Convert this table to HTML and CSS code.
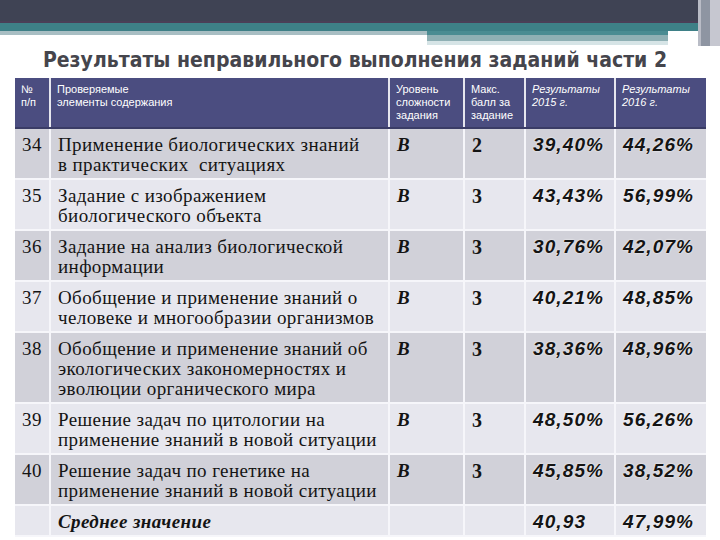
FILE: index.html
```html
<!DOCTYPE html>
<html lang="ru">
<head>
<meta charset="utf-8">
<title>Результаты</title>
<link rel="stylesheet" href="styles.css">
</head>
<body>
<div class="slide">
  <div class="top">
    <div class="band-dark"></div>
    <div class="band-line"></div>
    <div class="band-teal"></div>
    <div class="band-split">
      <div class="split-left"></div>
      <div class="split-right">
        <div class="sr-teal"></div>
        <div class="sr-gray"></div>
        <div class="sr-light"></div>
      </div>
    </div>
    <div class="edge"><span class="edge-a"></span><span class="edge-b"></span><span class="edge-c"></span></div>
  </div>
  <h1 class="title">Результаты неправильного выполнения заданий части 2</h1>
  <table class="grid">
    <colgroup>
      <col class="c1"><col class="c2"><col class="c3"><col class="c4"><col class="c5"><col class="c6">
    </colgroup>
    <thead>
      <tr>
        <th>№<br>п/п</th>
        <th>Проверяемые<br>элементы содержания</th>
        <th>Уровень<br>сложности<br>задания</th>
        <th>Макс.<br>балл за<br>задание</th>
        <th class="it">Результаты<br>2015 г.</th>
        <th class="it">Результаты<br>2016 г.</th>
      </tr>
    </thead>
    <tbody>
      <tr class="dk"><td class="n">34</td><td>Применение биологических знаний<br>в практических&nbsp; ситуациях</td><td class="lv">В</td><td class="mx">2</td><td class="pc">39,40%</td><td class="pc">44,26%</td></tr>
      <tr class="lt"><td class="n">35</td><td>Задание с изображением<br>биологического объекта</td><td class="lv">В</td><td class="mx">3</td><td class="pc">43,43%</td><td class="pc">56,99%</td></tr>
      <tr class="dk"><td class="n">36</td><td>Задание на анализ биологической<br>информации</td><td class="lv">В</td><td class="mx">3</td><td class="pc">30,76%</td><td class="pc">42,07%</td></tr>
      <tr class="lt"><td class="n">37</td><td>Обобщение и применение знаний о<br>человеке и многообразии организмов</td><td class="lv">В</td><td class="mx">3</td><td class="pc">40,21%</td><td class="pc">48,85%</td></tr>
      <tr class="dk"><td class="n">38</td><td>Обобщение и применение знаний об<br>экологических закономерностях и<br>эволюции органического мира</td><td class="lv">В</td><td class="mx">3</td><td class="pc">38,36%</td><td class="pc">48,96%</td></tr>
      <tr class="lt"><td class="n">39</td><td>Решение задач по цитологии на<br>применение знаний в новой ситуации</td><td class="lv">В</td><td class="mx">3</td><td class="pc">48,50%</td><td class="pc">56,26%</td></tr>
      <tr class="dk"><td class="n">40</td><td>Решение задач по генетике на<br>применение знаний в новой ситуации</td><td class="lv">В</td><td class="mx">3</td><td class="pc">45,85%</td><td class="pc">38,52%</td></tr>
      <tr class="lt"><td class="n"></td><td class="avg">Среднее значение</td><td></td><td></td><td class="pc">40,93</td><td class="pc">47,99%</td></tr>
    </tbody>
  </table>
</div>
</body>
</html>
```
FILE: styles.css
```css
html, body {
  margin: 0;
  padding: 0;
  background: #ffffff;
}
.slide {
  width: 720px;
  height: 540px;
  overflow: hidden;
  position: relative;
  background: #ffffff;
}
.top {
  position: relative;
}
.band-dark { height: 21px; background: #3f4354; }
.band-line { height: 2px; background: #4a3f57; }
.band-teal { height: 8px; background: #3e8087; }
.band-split { display: flex; }
.split-left {
  width: 427px;
  height: 4px;
  background: #a8bec3;
}
.split-right { width: 241px; }
.sr-teal { height: 4px; background: #4a8c92; }
.sr-gray { height: 6px; background: #8fb0b4; }
.sr-light { height: 4px; background: #d6e4e6; }
.edge {
  position: absolute;
  top: 0;
  right: 0;
  height: 46px;
  width: 22px;
  display: flex;
}
.edge-a { width: 3px; background: #b9bcc6; }
.edge-b { width: 9px; background: #8e95a2; }
.edge-c { width: 10px; background: #c6c7d0; }

.title {
  margin: 2px 0 0 0;
  height: 31px;
  text-align: center;
  font-family: "DejaVu Sans", sans-serif;
  font-stretch: condensed;
  font-weight: bold;
  font-size: 21px;
  line-height: 26px;
  color: #45454c;
  padding-right: 10px;
}

.grid {
  margin-left: 15px;
  width: 691px;
  border-collapse: collapse;
  table-layout: fixed;
}
.c1 { width: 35px; }
.c2 { width: 339px; }
.c3 { width: 75px; }
.c4 { width: 61px; }
.c5 { width: 90px; }
.c6 { width: 91px; }

.grid th {
  background: #4b4d80;
  color: #ffffff;
  font-family: "Liberation Sans", Arial, sans-serif;
  font-weight: normal;
  font-size: 11px;
  line-height: 13px;
  text-align: left;
  vertical-align: top;
  padding: 5px 6px 5px 6px;
  border-left: 2px solid #e6e6ee;
  border-bottom: 2px solid #3a3c66;
}
.grid th:first-child { border-left: none; }
.grid th.it { font-style: italic; }

.grid td {
  font-family: "Liberation Serif", "Times New Roman", serif;
  font-size: 19px;
  letter-spacing: 0.4px;
  line-height: 20px;
  color: #141414;
  vertical-align: top;
  padding: 6px 7px 3px 7px;
  border: 2px solid #f6f6fa;
  border-right: none;
}
.grid td:first-child { border-left: none; }
.grid tr.dk td { background: #d1d1d9; }
.grid tr.lt td { background: #e7e7ee; }
.grid td.lv {
  font-weight: bold;
  font-style: italic;
}
.grid td.mx {
  font-weight: bold;
  font-size: 20px;
}
.grid td.pc {
  font-family: "Liberation Sans", Arial, sans-serif;
  font-weight: bold;
  font-style: italic;
  font-size: 19px;
  letter-spacing: 1.1px;
  text-shadow: 0 0 2px #ffffff;
}
.grid td.avg {
  font-weight: bold;
  font-style: italic;
}
```
